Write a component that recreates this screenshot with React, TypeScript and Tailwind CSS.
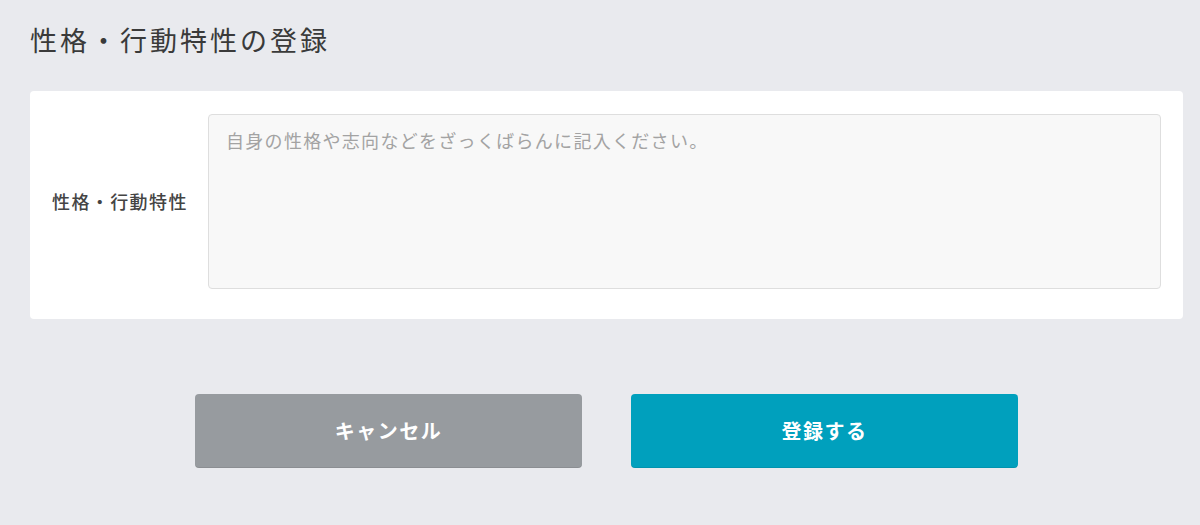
import { useState } from "react";

const FONT = "font-['Noto_Sans_CJK_JP','Noto_Sans',sans-serif]";

export default function App() {
  const [text, setText] = useState("");

  return (
    <div className={`min-h-[525px] bg-[#e9eaee] pl-[30px] pr-[17px] pt-[20px] ${FONT}`}>
      {/* Title */}
      <h1 className="text-[27px] leading-[40px] tracking-[3px] text-[#3a3a3a]">
        性格・行動特性の登録
      </h1>

      {/* Form card */}
      <div className="mt-[31px] flex items-center rounded-[4px] bg-white pb-[30px] pl-[22px] pr-[22px] pt-[23px]">
        <label
          htmlFor="trait"
          className="w-[156px] shrink-0 text-[18px] font-medium tracking-[1.4px] text-[#444]"
        >
          性格・行動特性
        </label>
        <textarea
          id="trait"
          value={text}
          onChange={(e) => setText(e.target.value)}
          placeholder="自身の性格や志向などをざっくばらんに記入ください。"
          className="h-[175px] flex-1 resize-none rounded-[4px] border-[1.5px] border-[#dedede] bg-[#f8f8f8] px-[17px] pt-[12px] text-[18px] leading-[26px] tracking-[1.3px] text-[#444] outline-none placeholder:text-[#a3a3a3]"
        />
      </div>

      {/* Actions */}
      <div className="mt-[75px] flex justify-center gap-[49px]">
        <button className="h-[74px] w-[387px] rounded-[4px] bg-[#979b9f] text-[20px] font-bold tracking-[1.5px] text-white shadow-[inset_0_-1px_0_rgba(0,0,0,0.08)]">
          キャンセル
        </button>
        <button className="h-[74px] w-[387px] rounded-[4px] bg-[#00a0bd] text-[20px] font-bold tracking-[1.5px] text-white shadow-[inset_0_-1px_0_rgba(0,0,0,0.08)]">
          登録する
        </button>
      </div>
    </div>
  );
}
